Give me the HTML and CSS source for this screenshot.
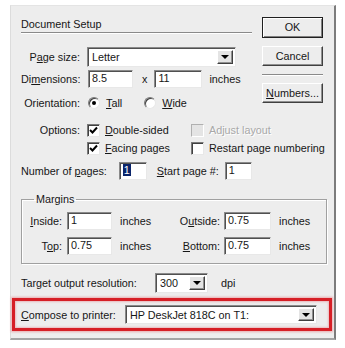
FILE: index.html
```html
<!DOCTYPE html>
<html>
<head>
<title>Document Setup</title>
<link rel="stylesheet" href="styles.css">
</head>

<body>
    <!-- ========================= Dialog Start ========================== -->
    <div class="dialog">
        <div class="top">
            <div class="main">
                <div class="title">Document Setup</div>
                <div class="row page-row">
                    <span class="label">P<u>a</u>ge size:</span>
                    <div class="combo page-combo">
                        <span class="value">Letter</span>
                        <span class="arrow"><i></i></span>
                    </div>
                </div>
                <div class="row dim-row">
                    <span class="label">Di<u>m</u>ensions:</span>
                    <div class="field dim1">8.5</div>
                    <span class="times">x</span>
                    <div class="field dim2">11</div>
                    <span class="unit">inches</span>
                </div>
                <div class="row orient-row">
                    <span class="label">Orientation:</span>
                    <span class="radio on"></span>
                    <span class="opt"><u>T</u>all</span>
                    <span class="radio wide"></span>
                    <span class="opt"><u>W</u>ide</span>
                </div>
            </div>
            <div class="buttons">
                <div class="btn default">OK</div>
                <div class="btn">Cancel</div>
                <div class="sep"></div>
                <div class="btn"><u>N</u>umbers...</div>
            </div>
        </div>

        <div class="options">
            <span class="label">Options:</span>
            <div class="check-item">
                <span class="check"><svg width="9" height="9" viewBox="0 0 9 9"><path d="M1 4 L3.5 6.5 L8 1.5" fill="none" stroke="#000" stroke-width="2"/></svg></span>
                <span><u>D</u>ouble-sided</span>
            </div>
            <div class="check-item disabled">
                <span class="check off"></span>
                <span>Adjust layout</span>
            </div>
            <span></span>
            <div class="check-item">
                <span class="check"><svg width="9" height="9" viewBox="0 0 9 9"><path d="M1 4 L3.5 6.5 L8 1.5" fill="none" stroke="#000" stroke-width="2"/></svg></span>
                <span><u>F</u>acing pages</span>
            </div>
            <div class="check-item">
                <span class="check"></span>
                <span>Restart page numbering</span>
            </div>
        </div>

        <div class="row pages-row">
            <span>Number of <u>p</u>ages:</span>
            <div class="field pages"><span class="sel">1</span></div>
            <span class="start"><u>S</u>tart page #:</span>
            <div class="field startpage">1</div>
        </div>

        <fieldset class="margins">
            <legend>Margins</legend>
            <div class="row mrow">
                <span class="mlabel"><u>I</u>nside:</span>
                <div class="field mfield">1</div>
                <span class="munit">inches</span>
                <span class="mlabel right">O<u>u</u>tside:</span>
                <div class="field mfield2">0.75</div>
                <span class="munit2">inches</span>
            </div>
            <div class="row mrow second">
                <span class="mlabel">T<u>o</u>p:</span>
                <div class="field mfield">0.75</div>
                <span class="munit">inches</span>
                <span class="mlabel right"><u>B</u>ottom:</span>
                <div class="field mfield2">0.75</div>
                <span class="munit2">inches</span>
            </div>
        </fieldset>

        <div class="row target-row">
            <span class="tlabel">Tar<u>g</u>et output resolution:</span>
            <div class="combo dpi-combo">
                <span class="value">300</span>
                <span class="arrow"><i></i></span>
            </div>
            <span class="dpi">dpi</span>
        </div>

        <div class="highlight">
            <span class="clabel"><u>C</u>ompose to printer:</span>
            <div class="combo printer-combo">
                <span class="value">HP DeskJet 818C on T1:</span>
                <span class="arrow"><i></i></span>
            </div>
        </div>
    </div>
</body>

</html>
```

FILE: styles.css
```css
* {
    margin: 0;
    padding: 0;
    box-sizing: border-box;
}

body {
    background-color: #fff;
    font-family: "Liberation Sans", Arial, sans-serif;
    font-size: 10.8px;
    color: #161616;
}

.dialog {
    margin: 5px 0 0 10px;
    width: 326px;
    height: 335px;
    padding: 11px 0 0 10px;
    background-color: #ededed;
    border-left: 1px solid #dcdcdc;
    border-top: 1px solid #e4e4e4;
    border-right: 2px solid #7c7c7c;
    border-bottom: 2px solid #a4a4a4;
}

.row {
    display: flex;
    align-items: center;
}

.top {
    display: flex;
    gap: 10px;
}

.main {
    width: 231px;
}

.title {
    line-height: 14px;
    padding-bottom: 1px;
    border-bottom: 1px solid #8a8a8a;
    box-shadow: 0 1px 0 #fff;
}

.label {
    width: 59px;
    text-align: right;
    margin-right: 7px;
}

.page-row {
    margin-top: 14px;
    height: 20px;
}

.dim-row {
    margin-top: 3px;
    height: 18px;
}

.orient-row {
    margin-top: 8px;
    height: 14px;
}

.field {
    height: 18px;
    line-height: 15px;
    padding-left: 3px;
    background-color: #fff;
    border: 1px solid;
    border-color: #8a8a8a #e8e8e8 #e8e8e8 #8a8a8a;
    box-shadow: inset 1px 1px 0 #505050;
}

.dim1 {
    width: 45px;
    margin-left: 1px;
}

.times {
    margin: 0 7px 0 9px;
}

.dim2 {
    width: 48px;
}

.unit {
    margin-left: 7px;
}

.combo {
    display: flex;
    align-items: center;
    background-color: #fff;
    border: 1px solid;
    border-color: #8a8a8a #e8e8e8 #e8e8e8 #8a8a8a;
    box-shadow: inset 1px 1px 0 #505050;
    padding: 2px 2px 2px 4px;
}

.combo .value {
    flex: 1;
}

.arrow {
    width: 16px;
    height: 100%;
    display: flex;
    align-items: center;
    justify-content: center;
    background-color: #e4e4e4;
    border: 1px solid;
    border-color: #fff #404040 #404040 #fff;
    box-shadow: inset -1px -1px 0 #909090;
}

.arrow i {
    border-left: 4px solid transparent;
    border-right: 4px solid transparent;
    border-top: 4px solid #000;
}

.page-combo {
    width: 149px;
    height: 20px;
}

.radio {
    width: 12px;
    height: 12px;
    border-radius: 50%;
    background-color: #fff;
    border: 1px solid;
    border-color: #7a7a7a #e8e8e8 #e8e8e8 #7a7a7a;
    box-shadow: inset 1px 1px 0 #404040;
    margin-left: 1px;
    display: flex;
    align-items: center;
    justify-content: center;
}

.radio.on::after {
    content: "";
    width: 4px;
    height: 4px;
    border-radius: 50%;
    background-color: #000;
}

.radio.wide {
    margin-left: 22px;
}

.opt {
    margin-left: 6px;
}

.buttons {
    width: 61px;
    display: flex;
    flex-direction: column;
}

.btn {
    height: 20px;
    line-height: 18px;
    text-align: center;
    background-color: #ededed;
    border: 1px solid;
    border-color: #fff #404040 #404040 #fff;
    box-shadow: inset -1px -1px 0 #909090;
    margin-bottom: 8px;
}

.btn.default {
    height: 21px;
    border: 1px solid #202020;
    box-shadow: inset 1px 1px 0 #fff, inset -1px -1px 0 #808080;
}

.sep {
    height: 2px;
    border-top: 1px solid #8a8a8a;
    border-bottom: 1px solid #fff;
    margin: 0 0 7px;
}

.options {
    display: grid;
    grid-template-columns: 66px 104px auto;
    row-gap: 4px;
    margin-top: 12px;
}

.options .label {
    width: 59px;
    line-height: 14px;
}

.check-item {
    display: flex;
    align-items: center;
    gap: 5px;
    height: 14px;
}

.check {
    width: 13px;
    height: 13px;
    background-color: #fff;
    border: 1px solid;
    border-color: #7a7a7a #e8e8e8 #e8e8e8 #7a7a7a;
    box-shadow: inset 1px 1px 0 #404040;
    display: flex;
    align-items: center;
    justify-content: center;
}

.check.off {
    background-color: #e4e4e4;
    border-color: #b0b0b0 #fff #fff #b0b0b0;
    box-shadow: none;
}

.check-item.disabled span:last-child {
    color: #a8a8a8;
    text-shadow: 1px 1px 0 #fff;
}

.pages-row {
    margin-top: 7px;
    height: 18px;
}

.pages {
    width: 28px;
    margin-left: 12px;
}

.sel {
    background-color: #0a246a;
    color: #fff;
    padding: 0 1px;
}

.start {
    margin-left: 10px;
}

.startpage {
    width: 27px;
    margin-left: 6px;
}

.margins {
    margin-top: 12px;
    width: 306px;
    border: 1px solid #a0a0a0;
    box-shadow: 1px 1px 0 #fff, inset 1px 1px 0 #fff;
    padding: 6px 0 8px 7px;
}

.margins legend {
    margin-left: 5px;
    padding: 0 2px;
    line-height: 14px;
}

.mrow {
    height: 18px;
}

.mrow.second {
    margin-top: 7px;
}

.mlabel {
    width: 33px;
    text-align: right;
    margin-right: 5px;
}

.mlabel.right {
    width: 50px;
    margin-right: 4px;
}

.mfield {
    width: 45px;
}

.munit {
    width: 58px;
    padding-left: 8px;
}

.mfield2 {
    width: 47px;
}

.munit2 {
    margin-left: 8px;
}

.target-row {
    margin-top: 9px;
    height: 20px;
}

.tlabel {
    width: 134px;
}

.dpi-combo {
    width: 53px;
    height: 20px;
}

.dpi {
    margin-left: 13px;
}

.highlight {
    display: flex;
    align-items: center;
    margin: 5px 0 0 -9px;
    width: 320px;
    height: 33px;
    padding: 0 12px 0 6px;
    border: 3px solid #d61f26;
    box-shadow: 0 0 2px 1px rgba(230, 90, 100, 0.45), inset 0 0 2px 1px rgba(230, 90, 100, 0.35);
}

.clabel {
    width: 104px;
}

.printer-combo {
    flex: 1;
    height: 19px;
}
```
